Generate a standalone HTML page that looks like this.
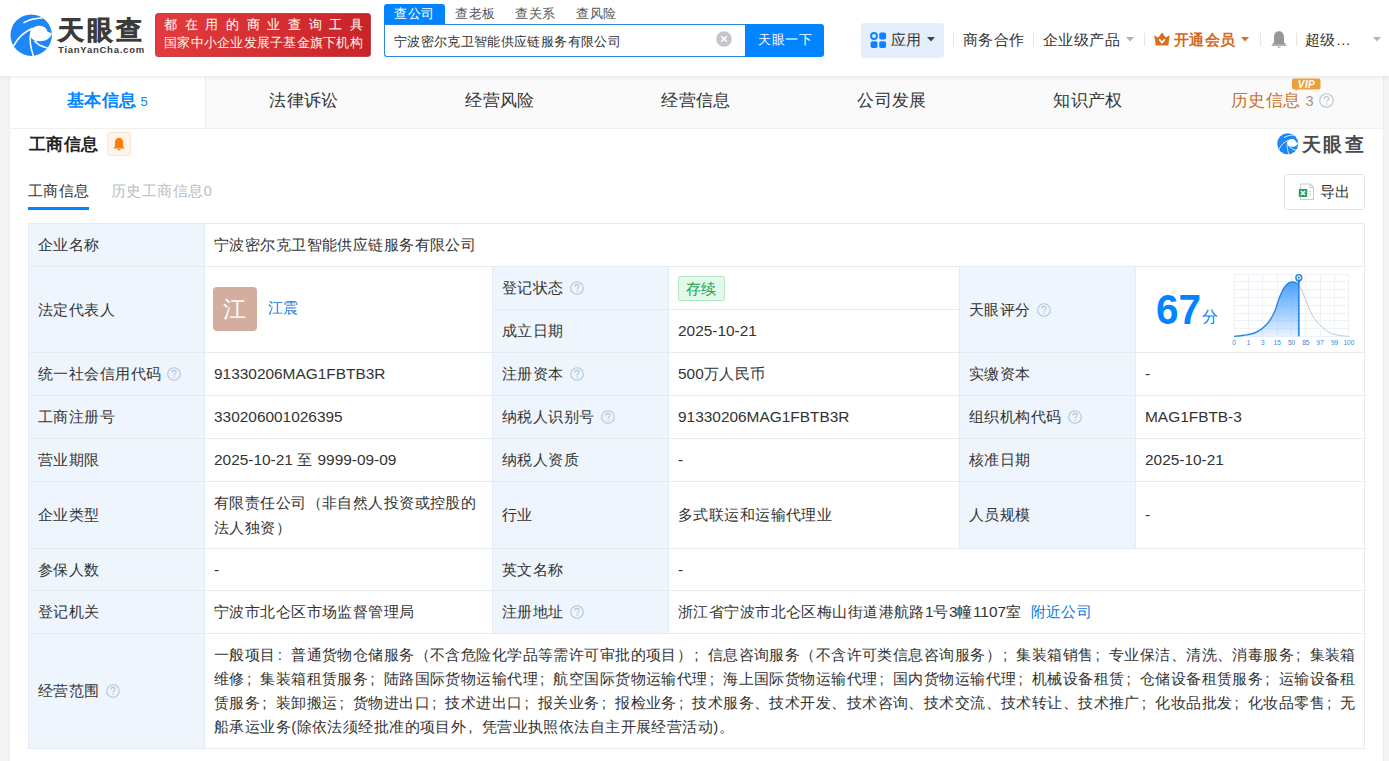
<!DOCTYPE html>
<html><head><meta charset="utf-8">
<style>
*{margin:0;padding:0;box-sizing:border-box}
html,body{width:1389px;height:761px;overflow:hidden;background:#fff}
body{font-family:"Liberation Sans",sans-serif;color:#333;position:relative;font-size:15px}
.a{position:absolute;white-space:nowrap}
#lstrip{left:0;top:76px;width:10px;height:685px;background:#f4f4f4;border-right:1px solid #ececec}
#rstrip{left:1383px;top:76px;width:6px;height:685px;background:#f4f4f4;border-left:1px solid #ececec}
#header{left:0;top:0;width:1389px;height:76px;background:#fff;box-shadow:0 1px 5px rgba(0,0,0,.09);z-index:5}
#tabbar{left:10px;top:76px;width:1373px;height:53px;background:#fafafa;border-bottom:1px solid #f0f0f0}
.tab{position:absolute;top:0;height:52px;width:196px;line-height:50px;text-align:center;font-size:17px;letter-spacing:0.4px;color:#333}
.tab.act{background:#fff;border-right:1px solid #eee;color:#0084ff;font-weight:bold}

.c{position:absolute;border:1px solid #e5ebf1;display:flex;align-items:center;padding-left:9px;font-size:15px;letter-spacing:0.43px;color:#333;white-space:nowrap;background:#fff}
.l{background:#eef5fd}
.q{display:inline-block;width:14px;height:14px;margin-left:6px;flex:none}
</style><style>
.n{font-size:15.43px;letter-spacing:0}
.p{display:inline-block;width:15.43px;padding-left:2px;letter-spacing:0;font-size:15.43px}
.v{display:block;white-space:nowrap;line-height:20px}
.v .q{vertical-align:-2px}
.av{vertical-align:middle;position:relative;left:-1px;top:-1px}
.av{display:inline-block;width:44px;height:44px;border-radius:4px;background:#d3ae9e;color:#fff;font-size:23px;line-height:44px;text-align:center}
.tag{display:inline-block;height:25px;line-height:23px;padding:0 7px;border:1px solid #b6e6c6;background:#e3f9e9;color:#22a04b;border-radius:2px}
</style></head><body>
<div id="lstrip" class="a"></div>
<div id="rstrip" class="a"></div>
<div id="header" class="a">
  <!-- logo -->
  <svg class="a" style="left:8px;top:12px" width="48" height="46" viewBox="0 0 48 46">
    <circle cx="23.2" cy="23.2" r="20.7" fill="#1c87f5"/>
    <path d="M24.3 16.3 C26.5 14.6 28.5 13.9 30.5 13.8 C33.5 13.7 36.5 14.6 38.1 16.7 C38.9 17.7 39.3 18.6 39.3 19.6 L43.9 21.6 L43.8 22.3 C43 24 42.3 25 41.3 25.8 C39.8 27.2 38.5 28 37 28.5 C35.3 29.1 33.5 29.3 31.8 29.3 C29.8 29.3 28.2 29 26.7 28.5 C24.6 27.6 23.2 26.2 22.7 24.5 C22.2 22.5 22.6 20.5 23.2 18.5 C23.5 17.6 23.9 16.9 24.3 16.3 Z" fill="#fff"/>
    <path d="M16 10.6 C20 8.2 27 6.2 33.9 6" stroke="#fff" stroke-width="1.6" fill="none" stroke-linecap="round"/>
    <path d="M5.7 33.9 C10 25 17 19.5 24.6 16.2" stroke="#fff" stroke-width="1.6" fill="none"/>
    <path d="M23.4 18 C21.9 23 21.8 27.5 22.4 31.7 C22.8 35 23.8 39.5 25.4 43.9" stroke="#fff" stroke-width="1.5" fill="none"/>
    <path d="M26.4 28.6 C28.5 31 30 32.4 31.8 33.2 C34 34.2 36.5 35.2 39.6 36" stroke="#fff" stroke-width="1.6" fill="none"/>
  </svg>
  <div class="a" style="left:58px;top:15px;font-size:26px;line-height:30px;font-weight:bold;color:#3d3a3a;letter-spacing:3px;-webkit-text-stroke:0.6px #3d3a3a">天眼查</div>
  <div class="a" style="left:58px;top:45px;font-size:9.5px;line-height:10px;font-weight:bold;color:#3d3a3a;letter-spacing:0.75px">TianYanCha.com</div>
  <!-- badge -->
  <div class="a" style="left:155px;top:13px;width:216px;height:44px;border-radius:3px;border:1px solid #b8484b;background:linear-gradient(90deg,#e33b3d,#c9232a)"></div>
  <div class="a" style="left:164px;top:16px;width:199px;font-size:13px;line-height:18px;color:#fff4e6;-webkit-text-stroke:0.1px #fff4e6;text-align:justify;text-align-last:justify;letter-spacing:0">都在用的商业查询工具</div>
  <div class="a" style="left:164px;top:34px;font-size:13px;letter-spacing:0.25px;line-height:18px;color:#fff4e6">国家中小企业发展子基金旗下机构</div>
  <!-- search tabs -->
  <div class="a" style="left:384px;top:4px;width:61px;height:21px;background:#0084ff;border-radius:3px 3px 0 0"></div>
  <div class="a" style="left:394px;top:4px;font-size:13px;letter-spacing:0.5px;line-height:19px;color:#fff">查公司</div>
  <div class="a" style="left:455px;top:4px;font-size:13px;letter-spacing:0.5px;line-height:19px;color:#555">查老板</div>
  <div class="a" style="left:515px;top:4px;font-size:13px;letter-spacing:0.5px;line-height:19px;color:#555">查关系</div>
  <div class="a" style="left:576px;top:4px;font-size:13px;letter-spacing:0.5px;line-height:19px;color:#555">查风险</div>
  <div class="a" style="left:384px;top:24px;width:362px;height:33px;border:1px solid #2f86d8;border-right:none;border-radius:0 0 0 3px;background:#fff"></div>
  <div class="a" style="left:394px;top:32px;font-size:13px;letter-spacing:0.35px;line-height:19px;color:#333">宁波密尔克卫智能供应链服务有限公司</div>
  <svg class="a" style="left:716px;top:31px" width="16" height="16" viewBox="0 0 16 16"><circle cx="8" cy="8" r="7.8" fill="#c4c6cb"/><path d="M5.2 5.2L10.8 10.8M10.8 5.2L5.2 10.8" stroke="#fff" stroke-width="1.6"/></svg>
  <div class="a" style="left:745px;top:24px;width:79px;height:33px;background:#0084ff;border-radius:0 3px 3px 0"></div>
  <div class="a" style="left:758px;top:30px;font-size:13px;letter-spacing:0.5px;line-height:20px;color:#fff">天眼一下</div>
  <!-- right nav -->
  <div class="a" style="left:861px;top:23px;width:83px;height:35px;border-radius:3px;background:#e4effc"></div>
  <svg class="a" style="left:870px;top:32px" width="17" height="17" viewBox="0 0 17 17"><circle cx="4" cy="4" r="2.9" fill="none" stroke="#0a84ff" stroke-width="2"/><rect x="9.2" y="0.6" width="6.9" height="6.9" rx="1.8" fill="#0a84ff"/><rect x="0.6" y="9.2" width="6.9" height="6.9" rx="1.8" fill="#0a84ff"/><rect x="9.2" y="9.2" width="6.9" height="6.9" rx="1.8" fill="#0a84ff"/></svg>
  <svg class="a" style="left:927px;top:37px" width="8" height="5" viewBox="0 0 8 5"><path d="M0 0H8L4 4.5Z" fill="#444"/></svg>
  <div class="a" style="left:891px;top:30px;font-size:15px;letter-spacing:0.43px;line-height:20px;color:#333">应用</div>
  <div class="a" style="left:953px;top:33px;width:1px;height:13px;background:#e6e6e6"></div>
  <div class="a" style="left:963px;top:30px;font-size:15px;letter-spacing:0.43px;line-height:20px;color:#333">商务合作</div>
  <div class="a" style="left:1033px;top:33px;width:1px;height:13px;background:#e6e6e6"></div>
  <div class="a" style="left:1043px;top:30px;font-size:15px;letter-spacing:0.43px;line-height:20px;color:#333">企业级产品</div>
  <svg class="a" style="left:1126px;top:37px" width="8" height="5" viewBox="0 0 8 5"><path d="M0 0H8L4 4.5Z" fill="#b3b3b3"/></svg>
  <div class="a" style="left:1144px;top:33px;width:1px;height:13px;background:#e6e6e6"></div>
  <svg class="a" style="left:1154px;top:32px" width="16" height="14" viewBox="0 0 16 14"><path d="M0.3 3.2L4.3 5.6L8 0.4L11.7 5.6L15.7 3.2L14.3 13.4H1.7Z" fill="#d8701f"/><path d="M5.2 7.2L8 10.6L10.8 7.2" fill="none" stroke="#fff" stroke-width="1.7" stroke-linejoin="round"/></svg>
  <div class="a" style="left:1174px;top:30px;font-size:15px;letter-spacing:0.43px;line-height:20px;color:#d2691e;font-weight:bold">开通会员</div>
  <svg class="a" style="left:1241px;top:37px" width="8" height="5" viewBox="0 0 8 5"><path d="M0 0H8L4 4.5Z" fill="#d8701f"/></svg>
  <div class="a" style="left:1260px;top:33px;width:1px;height:13px;background:#e6e6e6"></div>
  <svg class="a" style="left:1271px;top:30px" width="16" height="19" viewBox="0 0 16 19"><path d="M8 1.2C4.6 1.2 3 3.8 3 7.2V12.2L1 14.6H15L13 12.2V7.2C13 3.8 11.4 1.2 8 1.2Z" fill="#94979c"/><rect x="0.5" y="14.4" width="15" height="1.3" rx="0.6" fill="#94979c"/><path d="M6.4 16.6H9.6V17.6H6.4Z" fill="#94979c"/></svg>
  <div class="a" style="left:1296px;top:33px;width:1px;height:13px;background:#e6e6e6"></div>
  <div class="a" style="left:1305px;top:30px;font-size:15px;letter-spacing:0.43px;line-height:20px;color:#333">超级…</div>
  <svg class="a" style="left:1373px;top:37px" width="8" height="5" viewBox="0 0 8 5"><path d="M0 0H8L4 4.5Z" fill="#b3b3b3"/></svg>
</div>
<div id="tabbar" class="a">
  <div class="tab act" style="left:0">基本信息<span style="font-size:13px;font-weight:normal;margin-left:4px">5</span></div>
  <div class="tab" style="left:196px">法律诉讼</div>
  <div class="tab" style="left:392px">经营风险</div>
  <div class="tab" style="left:588px">经营信息</div>
  <div class="tab" style="left:784px">公司发展</div>
  <div class="tab" style="left:980px">知识产权</div>
  <div class="tab" style="left:1176px"><span style="position:absolute;left:45px;top:0;color:#c5732c">历史信息</span><span style="position:absolute;left:119.5px;top:0px;font-size:14.5px;color:#999;letter-spacing:0">3</span>
<svg style="position:absolute;left:132.5px;top:17px" width="15" height="15" viewBox="0 0 14 14"><circle cx="7" cy="7" r="6.3" fill="none" stroke="#c2c6cc" stroke-width="1.1"/><path d="M4.9 5.5C4.9 4.2 5.9 3.4 7 3.4C8.2 3.4 9.1 4.2 9.1 5.3C9.1 6.5 7.1 6.9 7.1 8.5" fill="none" stroke="#c2c6cc" stroke-width="1.1"/><circle cx="7.1" cy="10.3" r="0.75" fill="#c2c6cc"/></svg>
<svg style="position:absolute;left:106px;top:1.5px" width="29" height="13" viewBox="0 0 29 13"><path d="M2 0.5H26.5A2 2 0 0 1 28.5 2.5V9.5A2 2 0 0 1 26.5 11.5H6L3.5 13L3.8 11.5H2A2 2 0 0 1 0 9.5V2.5A2 2 0 0 1 2 0.5Z" fill="#e9a23b"/><text x="14.5" y="9.6" text-anchor="middle" font-family="Liberation Sans" font-weight="bold" font-style="italic" font-size="10" fill="#fff">VIP</text></svg></div>
</div>

<div class="a" style="left:29px;top:133px;font-size:17px;letter-spacing:0.4px;line-height:24px;font-weight:bold;color:#222">工商信息</div>
<div class="a" style="left:107px;top:132px;width:24px;height:24px;border:1px solid #fce4d2;background:#fff4ea;border-radius:3px"></div>
<svg class="a" style="left:113px;top:137px" width="12" height="14" viewBox="0 0 12 14"><path d="M6 0.8C3.4 0.8 1.9 2.9 1.9 5.6V9.6L0.3 11.4H11.7L10.1 9.6V5.6C10.1 2.9 8.6 0.8 6 0.8Z" fill="#ff7d00"/><path d="M4.4 12H7.6C7.6 12.9 6.9 13.4 6 13.4C5.1 13.4 4.4 12.9 4.4 12Z" fill="#ff7d00"/></svg>
<div class="a" style="left:28px;top:181px;font-size:15px;letter-spacing:0.43px;line-height:20px;color:#333">工商信息</div>
<div class="a" style="left:28px;top:207px;width:61px;height:3px;background:#0084ff"></div>
<div class="a" style="left:111px;top:181px;font-size:15px;letter-spacing:0.43px;line-height:20px;color:#b9bec7">历史工商信息0</div>
<div class="a" style="left:1284px;top:174px;width:81px;height:36px;border:1px solid #dfe3e8;border-radius:3px"></div>
<svg class="a" style="left:1298px;top:183px" width="17" height="18" viewBox="0 0 17 18"><path d="M2.6 1H12.2L15.5 4.3V16.5H2.6Z" fill="#fff" stroke="#c9ccd1" stroke-width="1.1"/><path d="M12 1V4.5H15.5" fill="none" stroke="#c9ccd1" stroke-width="1"/><path d="M10.5 8.5H13M10.5 10.5H13M10.5 12.5H13" stroke="#d5d8dc" stroke-width="1"/><rect x="0.8" y="5.9" width="8.4" height="8" rx="0.8" fill="#2a9d5c"/><path d="M3 8L7 12M7 8L3 12" stroke="#fff" stroke-width="1.6"/></svg>
<div class="a" style="left:1320px;top:182px;font-size:15px;letter-spacing:0.43px;line-height:20px;color:#333">导出</div>
<svg class="a" style="left:1276px;top:132px" width="24.3" height="23.3" viewBox="0 0 48 46">
    <circle cx="23.2" cy="23.2" r="20.7" fill="#1c87f5"/>
    <path d="M24.3 16.3 C26.5 14.6 28.5 13.9 30.5 13.8 C33.5 13.7 36.5 14.6 38.1 16.7 C38.9 17.7 39.3 18.6 39.3 19.6 L43.9 21.6 L43.8 22.3 C43 24 42.3 25 41.3 25.8 C39.8 27.2 38.5 28 37 28.5 C35.3 29.1 33.5 29.3 31.8 29.3 C29.8 29.3 28.2 29 26.7 28.5 C24.6 27.6 23.2 26.2 22.7 24.5 C22.2 22.5 22.6 20.5 23.2 18.5 C23.5 17.6 23.9 16.9 24.3 16.3 Z" fill="#fff"/>
    <path d="M16 10.6 C20 8.2 27 6.2 33.9 6" stroke="#fff" stroke-width="1.6" fill="none" stroke-linecap="round"/>
    <path d="M5.7 33.9 C10 25 17 19.5 24.6 16.2" stroke="#fff" stroke-width="1.6" fill="none"/>
    <path d="M23.4 18 C21.9 23 21.8 27.5 22.4 31.7 C22.8 35 23.8 39.5 25.4 43.9" stroke="#fff" stroke-width="1.5" fill="none"/>
    <path d="M26.4 28.6 C28.5 31 30 32.4 31.8 33.2 C34 34.2 36.5 35.2 39.6 36" stroke="#fff" stroke-width="1.6" fill="none"/>
  </svg>
<div class="a" style="left:1302px;top:133px;font-size:19px;letter-spacing:2.3px;line-height:24px;font-weight:bold;color:#4a4a4f">天眼查</div>
<div class="c l" style="left:28px;top:223px;width:177px;height:44px;"><span class="v">企业名称</span></div>
<div class="c" style="left:204px;top:223px;width:1161px;height:44px;"><span class="v">宁波密尔克卫智能供应链服务有限公司</span></div>
<div class="c l" style="left:28px;top:266px;width:177px;height:87px;"><span class="v">法定代表人</span></div>
<div class="c" style="left:204px;top:266px;width:289px;height:87px;"><span class="v"><span class="av">江</span><span style="color:#0a7ae0;margin-left:10px">江震</span></span></div>
<div class="c l" style="left:492px;top:266px;width:177px;height:44px;"><span class="v">登记状态<svg class="q" width="14" height="14" viewBox="0 0 14 14"><circle cx="7" cy="7" r="6.3" fill="none" stroke="#afc5db" stroke-width="1.1"/><path d="M4.9 5.5C4.9 4.2 5.9 3.4 7 3.4C8.2 3.4 9.1 4.2 9.1 5.3C9.1 6.5 7.1 6.9 7.1 8.5" fill="none" stroke="#afc5db" stroke-width="1.1"/><circle cx="7.1" cy="10.3" r="0.75" fill="#afc5db"/></svg></span></div>
<div class="c" style="left:668px;top:266px;width:292px;height:44px;"><span class="v"><span class="tag">存续</span></span></div>
<div class="c l" style="left:492px;top:309px;width:177px;height:44px;"><span class="v">成立日期</span></div>
<div class="c" style="left:668px;top:309px;width:292px;height:44px;"><span class="v"><span class="n">2025-10-21</span></span></div>
<div class="c l" style="left:959px;top:266px;width:177px;height:87px;"><span class="v">天眼评分<svg class="q" width="14" height="14" viewBox="0 0 14 14"><circle cx="7" cy="7" r="6.3" fill="none" stroke="#afc5db" stroke-width="1.1"/><path d="M4.9 5.5C4.9 4.2 5.9 3.4 7 3.4C8.2 3.4 9.1 4.2 9.1 5.3C9.1 6.5 7.1 6.9 7.1 8.5" fill="none" stroke="#afc5db" stroke-width="1.1"/><circle cx="7.1" cy="10.3" r="0.75" fill="#afc5db"/></svg></span></div>
<div class="c" style="left:1135px;top:266px;width:230px;height:87px;"><span class="v"><span class="n"><svg style="position:absolute;left:0;top:0" width="228" height="85" viewBox="0 0 228 85">
<defs><linearGradient id="gf" x1="0" y1="0" x2="0" y2="1"><stop offset="0" stop-color="#3f9cff" stop-opacity="0.95"/><stop offset="1" stop-color="#3f9cff" stop-opacity="0.12"/></linearGradient></defs>
<g stroke="#edf2f9" stroke-width="1" shape-rendering="crispEdges"><line x1="98.10" y1="7.20" x2="98.10" y2="69.40"/><line x1="112.45" y1="7.20" x2="112.45" y2="69.40"/><line x1="126.80" y1="7.20" x2="126.80" y2="69.40"/><line x1="141.15" y1="7.20" x2="141.15" y2="69.40"/><line x1="155.50" y1="7.20" x2="155.50" y2="69.40"/><line x1="169.85" y1="7.20" x2="169.85" y2="69.40"/><line x1="184.20" y1="7.20" x2="184.20" y2="69.40"/><line x1="198.55" y1="7.20" x2="198.55" y2="69.40"/><line x1="212.90" y1="7.20" x2="212.90" y2="69.40"/><line x1="98.10" y1="7.20" x2="212.90" y2="7.20"/><line x1="98.10" y1="14.97" x2="212.90" y2="14.97"/><line x1="98.10" y1="22.75" x2="212.90" y2="22.75"/><line x1="98.10" y1="30.52" x2="212.90" y2="30.52"/><line x1="98.10" y1="38.30" x2="212.90" y2="38.30"/><line x1="98.10" y1="46.07" x2="212.90" y2="46.07"/><line x1="98.10" y1="53.85" x2="212.90" y2="53.85"/><line x1="98.10" y1="61.62" x2="212.90" y2="61.62"/><line x1="98.10" y1="69.40" x2="212.90" y2="69.40"/></g>
<path d="M98.10 69.40 C99.72 69.22 104.65 68.78 107.80 68.30 C110.95 67.82 114.23 67.42 117.00 66.50 C119.77 65.58 122.10 64.33 124.40 62.80 C126.70 61.27 128.97 59.30 130.80 57.30 C132.63 55.30 134.02 53.10 135.40 50.80 C136.78 48.50 138.03 46.10 139.10 43.50 C140.17 40.90 140.88 37.82 141.80 35.20 C142.72 32.58 143.52 30.25 144.60 27.80 C145.68 25.35 146.92 22.48 148.30 20.50 C149.68 18.52 151.52 16.82 152.90 15.90 C154.28 14.98 155.38 15.00 156.60 15.00 C157.82 15.00 159.17 15.40 160.20 15.90 C161.23 16.40 162.37 17.65 162.80 18.00 L162.80 69.40 L98.10 69.40 Z" fill="url(#gf)"/>
<path d="M162.80 18.00 C163.42 19.15 165.27 22.22 166.50 24.90 C167.73 27.58 168.98 31.03 170.20 34.10 C171.42 37.17 172.43 40.38 173.80 43.30 C175.17 46.22 176.70 49.15 178.40 51.60 C180.10 54.05 182.00 56.00 184.00 58.00 C186.00 60.00 187.80 61.98 190.40 63.60 C193.00 65.22 195.77 66.72 199.60 67.70 C203.43 68.68 211.10 69.20 213.40 69.50" fill="none" stroke="#bfc9d4" stroke-width="1"/>
<path d="M98.10 69.40 C99.72 69.22 104.65 68.78 107.80 68.30 C110.95 67.82 114.23 67.42 117.00 66.50 C119.77 65.58 122.10 64.33 124.40 62.80 C126.70 61.27 128.97 59.30 130.80 57.30 C132.63 55.30 134.02 53.10 135.40 50.80 C136.78 48.50 138.03 46.10 139.10 43.50 C140.17 40.90 140.88 37.82 141.80 35.20 C142.72 32.58 143.52 30.25 144.60 27.80 C145.68 25.35 146.92 22.48 148.30 20.50 C149.68 18.52 151.52 16.82 152.90 15.90 C154.28 14.98 155.38 15.00 156.60 15.00 C157.82 15.00 159.17 15.40 160.20 15.90 C161.23 16.40 162.37 17.65 162.80 18.00" fill="none" stroke="#2b87e3" stroke-width="1.4"/>
<line x1="162.80" y1="15" x2="162.80" y2="69.40" stroke="#2b87e3" stroke-width="1.7"/>
<path d="M159.80 11.90 L162.80 17.30 L165.80 11.90 Z" fill="#2b87e3"/>
<circle cx="162.80" cy="10.70" r="2.9" fill="#fff" stroke="#2b87e3" stroke-width="1.5"/>
<circle cx="162.80" cy="10.70" r="1.1" fill="#2b87e3"/>
<g font-family="Liberation Sans" font-size="6.5" fill="#3b86d6"><text x="98.10" y="78.30" text-anchor="middle">0</text><text x="112.45" y="78.30" text-anchor="middle">1</text><text x="126.80" y="78.30" text-anchor="middle">3</text><text x="141.15" y="78.30" text-anchor="middle">15</text><text x="155.50" y="78.30" text-anchor="middle">50</text><text x="169.85" y="78.30" text-anchor="middle">85</text><text x="184.20" y="78.30" text-anchor="middle">97</text><text x="198.55" y="78.30" text-anchor="middle">99</text><text x="212.90" y="78.30" text-anchor="middle">100</text></g>
</svg>
<span style="position:absolute;left:20px;top:20.5px;font-size:40.5px;line-height:44px;font-weight:bold;color:#0084ff;letter-spacing:0;transform:scaleY(1.07);transform-origin:0 37px">67</span>
<span style="position:absolute;left:66px;top:40px;font-size:16px;line-height:20px;color:#0084ff;letter-spacing:0">分</span>
</span></span></div>
<div class="c l" style="left:28px;top:352px;width:177px;height:44px;"><span class="v">统一社会信用代码<svg class="q" width="14" height="14" viewBox="0 0 14 14"><circle cx="7" cy="7" r="6.3" fill="none" stroke="#afc5db" stroke-width="1.1"/><path d="M4.9 5.5C4.9 4.2 5.9 3.4 7 3.4C8.2 3.4 9.1 4.2 9.1 5.3C9.1 6.5 7.1 6.9 7.1 8.5" fill="none" stroke="#afc5db" stroke-width="1.1"/><circle cx="7.1" cy="10.3" r="0.75" fill="#afc5db"/></svg></span></div>
<div class="c" style="left:204px;top:352px;width:289px;height:44px;"><span class="v"><span class="n">91330206MAG1FBTB3R</span></span></div>
<div class="c l" style="left:492px;top:352px;width:177px;height:44px;"><span class="v">注册资本<svg class="q" width="14" height="14" viewBox="0 0 14 14"><circle cx="7" cy="7" r="6.3" fill="none" stroke="#afc5db" stroke-width="1.1"/><path d="M4.9 5.5C4.9 4.2 5.9 3.4 7 3.4C8.2 3.4 9.1 4.2 9.1 5.3C9.1 6.5 7.1 6.9 7.1 8.5" fill="none" stroke="#afc5db" stroke-width="1.1"/><circle cx="7.1" cy="10.3" r="0.75" fill="#afc5db"/></svg></span></div>
<div class="c" style="left:668px;top:352px;width:292px;height:44px;"><span class="v"><span class="n">500</span>万人民币</span></div>
<div class="c l" style="left:959px;top:352px;width:177px;height:44px;"><span class="v">实缴资本</span></div>
<div class="c" style="left:1135px;top:352px;width:230px;height:44px;"><span class="v"><span class="n">-</span></span></div>
<div class="c l" style="left:28px;top:395px;width:177px;height:44px;"><span class="v">工商注册号</span></div>
<div class="c" style="left:204px;top:395px;width:289px;height:44px;"><span class="v"><span class="n">330206001026395</span></span></div>
<div class="c l" style="left:492px;top:395px;width:177px;height:44px;"><span class="v">纳税人识别号<svg class="q" width="14" height="14" viewBox="0 0 14 14"><circle cx="7" cy="7" r="6.3" fill="none" stroke="#afc5db" stroke-width="1.1"/><path d="M4.9 5.5C4.9 4.2 5.9 3.4 7 3.4C8.2 3.4 9.1 4.2 9.1 5.3C9.1 6.5 7.1 6.9 7.1 8.5" fill="none" stroke="#afc5db" stroke-width="1.1"/><circle cx="7.1" cy="10.3" r="0.75" fill="#afc5db"/></svg></span></div>
<div class="c" style="left:668px;top:395px;width:292px;height:44px;"><span class="v"><span class="n">91330206MAG1FBTB3R</span></span></div>
<div class="c l" style="left:959px;top:395px;width:177px;height:44px;"><span class="v">组织机构代码<svg class="q" width="14" height="14" viewBox="0 0 14 14"><circle cx="7" cy="7" r="6.3" fill="none" stroke="#afc5db" stroke-width="1.1"/><path d="M4.9 5.5C4.9 4.2 5.9 3.4 7 3.4C8.2 3.4 9.1 4.2 9.1 5.3C9.1 6.5 7.1 6.9 7.1 8.5" fill="none" stroke="#afc5db" stroke-width="1.1"/><circle cx="7.1" cy="10.3" r="0.75" fill="#afc5db"/></svg></span></div>
<div class="c" style="left:1135px;top:395px;width:230px;height:44px;"><span class="v"><span class="n">MAG1FBTB-3</span></span></div>
<div class="c l" style="left:28px;top:438px;width:177px;height:44px;"><span class="v">营业期限</span></div>
<div class="c" style="left:204px;top:438px;width:289px;height:44px;"><span class="v"><span class="n">2025-10-21</span> 至 <span class="n">9999-09-09</span></span></div>
<div class="c l" style="left:492px;top:438px;width:177px;height:44px;"><span class="v">纳税人资质</span></div>
<div class="c" style="left:668px;top:438px;width:292px;height:44px;"><span class="v"><span class="n">-</span></span></div>
<div class="c l" style="left:959px;top:438px;width:177px;height:44px;"><span class="v">核准日期</span></div>
<div class="c" style="left:1135px;top:438px;width:230px;height:44px;"><span class="v"><span class="n">2025-10-21</span></span></div>
<div class="c l" style="left:28px;top:481px;width:177px;height:68px;"><span class="v">企业类型</span></div>
<div class="c" style="left:204px;top:481px;width:289px;height:68px;"><span class="v"><div style="white-space:normal;line-height:25px;width:268px">有限责任公司（非自然人投资或控股的法人独资）</div></span></div>
<div class="c l" style="left:492px;top:481px;width:177px;height:68px;"><span class="v">行业</span></div>
<div class="c" style="left:668px;top:481px;width:292px;height:68px;"><span class="v">多式联运和运输代理业</span></div>
<div class="c l" style="left:959px;top:481px;width:177px;height:68px;"><span class="v">人员规模</span></div>
<div class="c" style="left:1135px;top:481px;width:230px;height:68px;"><span class="v"><span class="n">-</span></span></div>
<div class="c l" style="left:28px;top:548px;width:177px;height:43px;"><span class="v">参保人数</span></div>
<div class="c" style="left:204px;top:548px;width:289px;height:43px;"><span class="v"><span class="n">-</span></span></div>
<div class="c l" style="left:492px;top:548px;width:177px;height:43px;"><span class="v">英文名称</span></div>
<div class="c" style="left:668px;top:548px;width:697px;height:43px;"><span class="v"><span class="n">-</span></span></div>
<div class="c l" style="left:28px;top:590px;width:177px;height:44px;"><span class="v">登记机关</span></div>
<div class="c" style="left:204px;top:590px;width:289px;height:44px;"><span class="v">宁波市北仑区市场监督管理局</span></div>
<div class="c l" style="left:492px;top:590px;width:177px;height:44px;"><span class="v">注册地址<svg class="q" width="14" height="14" viewBox="0 0 14 14"><circle cx="7" cy="7" r="6.3" fill="none" stroke="#afc5db" stroke-width="1.1"/><path d="M4.9 5.5C4.9 4.2 5.9 3.4 7 3.4C8.2 3.4 9.1 4.2 9.1 5.3C9.1 6.5 7.1 6.9 7.1 8.5" fill="none" stroke="#afc5db" stroke-width="1.1"/><circle cx="7.1" cy="10.3" r="0.75" fill="#afc5db"/></svg></span></div>
<div class="c" style="left:668px;top:590px;width:697px;height:44px;"><span class="v">浙江省宁波市北仑区梅山街道港航路<span class="n">1</span>号<span class="n">3</span>幢<span class="n">1107</span>室<span style="color:#0a7ae0;margin-left:9px">附近公司</span></span></div>
<div class="c l" style="left:28px;top:633px;width:177px;height:116px;"><span class="v">经营范围<svg class="q" width="14" height="14" viewBox="0 0 14 14"><circle cx="7" cy="7" r="6.3" fill="none" stroke="#afc5db" stroke-width="1.1"/><path d="M4.9 5.5C4.9 4.2 5.9 3.4 7 3.4C8.2 3.4 9.1 4.2 9.1 5.3C9.1 6.5 7.1 6.9 7.1 8.5" fill="none" stroke="#afc5db" stroke-width="1.1"/><circle cx="7.1" cy="10.3" r="0.75" fill="#afc5db"/></svg></span></div>
<div class="c" style="left:204px;top:633px;width:1161px;height:116px;"><span class="v"><div style="white-space:normal;line-height:24px;width:1146px">一般项目<span class="p">:</span>普通货物仓储服务（不含危险化学品等需许可审批的项目）<span class="p">;</span>信息咨询服务（不含许可类信息咨询服务）<span class="p">;</span>集装箱销售<span class="p">;</span>专业保洁、清洗、消毒服务<span class="p">;</span>集装箱维修<span class="p">;</span>集装箱租赁服务<span class="p">;</span>陆路国际货物运输代理<span class="p">;</span>航空国际货物运输代理<span class="p">;</span>海上国际货物运输代理<span class="p">;</span>国内货物运输代理<span class="p">;</span>机械设备租赁<span class="p">;</span>仓储设备租赁服务<span class="p">;</span>运输设备租赁服务<span class="p">;</span>装卸搬运<span class="p">;</span>货物进出口<span class="p">;</span>技术进出口<span class="p">;</span>报关业务<span class="p">;</span>报检业务<span class="p">;</span>技术服务、技术开发、技术咨询、技术交流、技术转让、技术推广<span class="p">;</span>化妆品批发<span class="p">;</span>化妆品零售<span class="p">;</span>无船承运业务(除依法须经批准的项目外<span class="p">,</span>凭营业执照依法自主开展经营活动)。</div></span></div>
</body></html>
